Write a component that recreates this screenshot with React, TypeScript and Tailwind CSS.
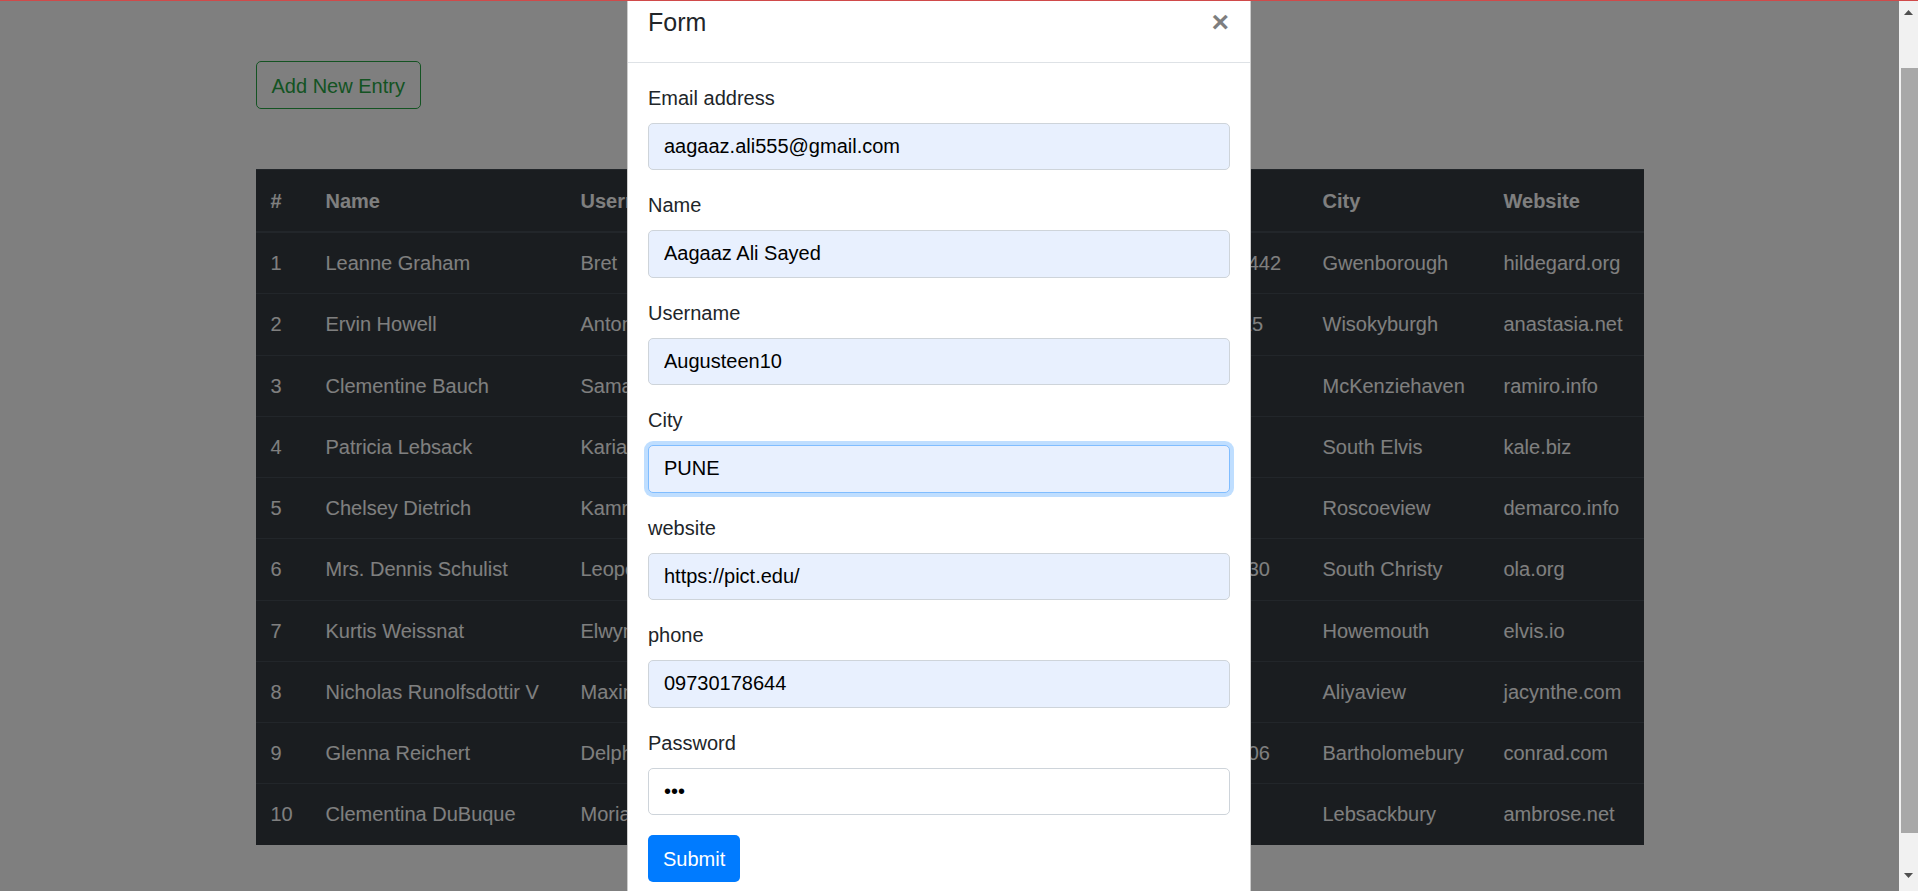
import React from 'react'

const users = [
  { id: 1, name: 'Leanne Graham', username: 'Bret', email: 'Sincere@april.biz', phone: '1-770-736-8031 x56442', city: 'Gwenborough', website: 'hildegard.org' },
  { id: 2, name: 'Ervin Howell', username: 'Antonette', email: 'Shanna@melissa.tv', phone: '010-692-6593 x09125', city: 'Wisokyburgh', website: 'anastasia.net' },
  { id: 3, name: 'Clementine Bauch', username: 'Samantha', email: 'Nathan@yesenia.net', phone: '1-463-123-4447', city: 'McKenziehaven', website: 'ramiro.info' },
  { id: 4, name: 'Patricia Lebsack', username: 'Karianne', email: 'Julianne.OConner@kory.org', phone: '493-170-9623 x156', city: 'South Elvis', website: 'kale.biz' },
  { id: 5, name: 'Chelsey Dietrich', username: 'Kamren', email: 'Lucio_Hettinger@annie.ca', phone: '(254)954-1289', city: 'Roscoeview', website: 'demarco.info' },
  { id: 6, name: 'Mrs. Dennis Schulist', username: 'Leopoldo_Corkery', email: 'Karley_Dach@jasper.info', phone: '1-477-935-8478 x6430', city: 'South Christy', website: 'ola.org' },
  { id: 7, name: 'Kurtis Weissnat', username: 'Elwyn.Skiles', email: 'Telly.Hoeger@billy.biz', phone: '210.067.6132', city: 'Howemouth', website: 'elvis.io' },
  { id: 8, name: 'Nicholas Runolfsdottir V', username: 'Maxime_Nienow', email: 'Sherwood@rosamond.me', phone: '586.493.6943 x140', city: 'Aliyaview', website: 'jacynthe.com' },
  { id: 9, name: 'Glenna Reichert', username: 'Delphine', email: 'Chaim_McDermott@dana.io', phone: '(775)976-6794 x41206', city: 'Bartholomebury', website: 'conrad.com' },
  { id: 10, name: 'Clementina DuBuque', username: 'Moriah.Stanton', email: 'Rey.Padberg@karina.biz', phone: '024-648-3804', city: 'Lebsackbury', website: 'ambrose.net' },
]

const fields = [
  { label: 'Email address', value: 'aagaaz.ali555@gmail.com', type: 'text', autofill: true },
  { label: 'Name', value: 'Aagaaz Ali Sayed', type: 'text', autofill: true },
  { label: 'Username', value: 'Augusteen10', type: 'text', autofill: true },
  { label: 'City', value: 'PUNE', type: 'text', autofill: true, focus: true },
  { label: 'website', value: 'https://pict.edu/', type: 'text', autofill: true },
  { label: 'phone', value: '09730178644', type: 'text', autofill: true },
  { label: 'Password', value: 'abc', type: 'password', autofill: false },
]

const th = 'text-left font-bold px-[15px] pt-[16px] pb-[15px] leading-[30px] border-t border-b-2 border-[#454d55]'
const td = 'px-[15px] py-[15px] leading-[30.25px] border-t border-[#454d55] whitespace-nowrap overflow-hidden'

export default function App() {
  return (
    <div className="relative flex w-[1918px] h-[891px] overflow-hidden font-['Liberation_Sans',Arial,sans-serif] text-[20px]">
      {/* page + modal */}
      <div className="relative flex-1 bg-white overflow-hidden">
        <div className="w-[1388px] mx-auto pt-[61px]">
          <button className="h-[48px] px-[15px] pt-[1px] border border-[#28a745] text-[#28a745] rounded-[5px] leading-[30px]">
            Add New Entry
          </button>

          <table className="mt-[60px] w-[1388px] table-fixed border-collapse bg-[#343a40] text-white">
            <colgroup>
              <col className="w-[55px]" />
              <col className="w-[255px]" />
              <col className="w-[195px]" />
              <col className="w-[292px]" />
              <col className="w-[255px]" />
              <col className="w-[181px]" />
              <col />
            </colgroup>
            <thead>
              <tr>
                <th className={th}>#</th>
                <th className={th}>Name</th>
                <th className={th}>Username</th>
                <th className={th}>Email</th>
                <th className={th}>Phone</th>
                <th className={th}>City</th>
                <th className={th}>Website</th>
              </tr>
            </thead>
            <tbody>
              {users.map((u) => (
                <tr key={u.id}>
                  <td className={td}>{u.id}</td>
                  <td className={td}>{u.name}</td>
                  <td className={td}>{u.username}</td>
                  <td className={td}>{u.email}</td>
                  <td className={td}>{u.phone}</td>
                  <td className={td}>{u.city}</td>
                  <td className={td}>{u.website}</td>
                </tr>
              ))}
            </tbody>
          </table>
        </div>

        {/* Backdrop */}
        <div className="absolute inset-0 bg-black/50" />

        {/* Modal */}
        <div className="absolute left-[627px] top-[-17px] w-[624px] bg-white border border-black/20 rounded-[6px] text-[#212529]">
          <div className="flex items-start justify-between p-[20px] border-b border-[#dee2e6]">
            <h5 className="text-[25px] leading-[37.5px] font-medium">Form</h5>
            <button className="-m-[20px] ml-auto p-[20px] pr-[21px] pt-[23px] text-[30px] font-bold leading-none text-black opacity-50">
              ×
            </button>
          </div>
          <div className="p-[20px]">
            {fields.map((f) => (
              <div key={f.label} className="mb-[20px]">
                <label className="block leading-[30px] mb-[10px]">{f.label}</label>
                <input
                  readOnly
                  type={f.type}
                  value={f.value}
                  className={
                    'block w-full h-[47.5px] px-[15px] rounded-[5px] border text-[20px] text-black outline-none ' +
                    (f.autofill ? 'bg-[#e8f0fe] ' : 'bg-white ') +
                    (f.focus ? 'border-[#80bdff] ring-4 ring-[#007bff]/25' : 'border-[#ced4da]')
                  }
                />
              </div>
            ))}
            <button className="h-[47px] px-[15px] bg-[#007bff] text-white rounded-[5px] leading-[30px]">
              Submit
            </button>
          </div>
        </div>
      </div>

      {/* Scrollbar */}
      <div className="w-[19px] flex flex-col bg-[#f1f1f1]">
        <div className="h-[17px] flex items-end justify-center">
          <svg width="9" height="5" viewBox="0 0 9 5" className="mb-[2px]">
            <path d="M4.5 0 L9 5 L0 5 Z" fill="#505050" />
          </svg>
        </div>
        <div className="flex-1 pl-[2px]">
          <div className="mt-[51px] h-[765px] bg-[#a8a8a8]" />
        </div>
        <div className="h-[17px] flex items-start justify-center">
          <svg width="9" height="5" viewBox="0 0 9 5" className="-mt-[1px]">
            <path d="M0 0 L9 0 L4.5 5 Z" fill="#505050" />
          </svg>
        </div>
      </div>

      {/* Top line */}
      <div className="absolute top-0 inset-x-0 h-px bg-[#d04a4a]" />
    </div>
  )
}
